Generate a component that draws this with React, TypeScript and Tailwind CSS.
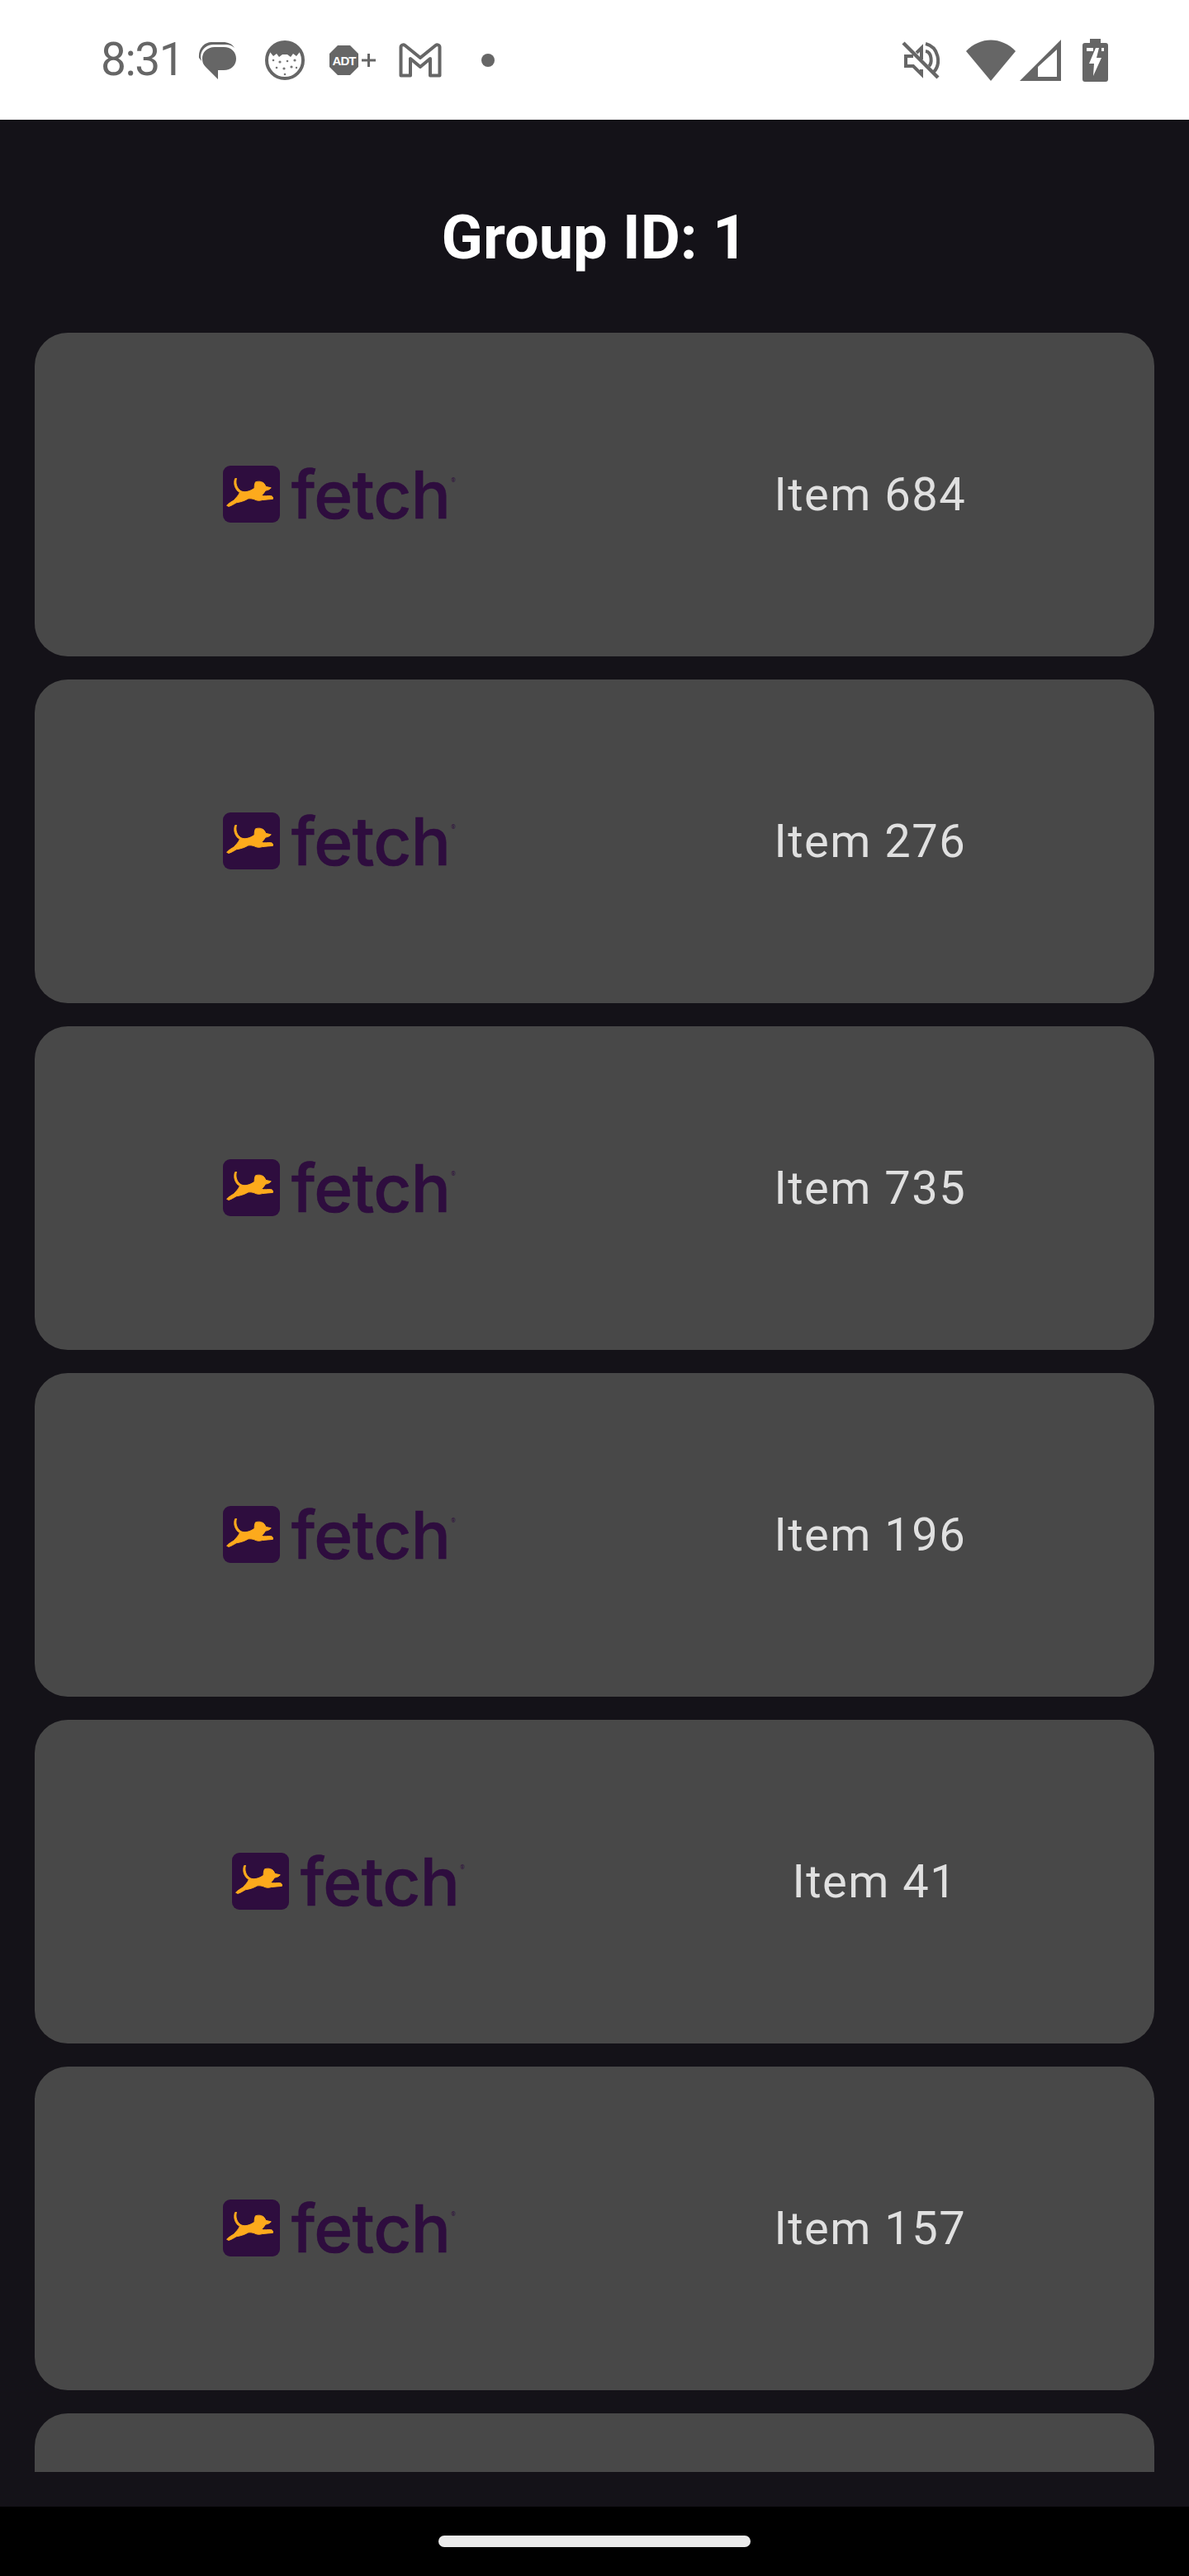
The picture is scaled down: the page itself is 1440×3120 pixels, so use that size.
import React from "react";

const items = ["Item 684", "Item 276", "Item 735", "Item 196", "Item 41", "Item 157"];

const FetchLogo: React.FC = () => (
	<div className="flex items-center w-[440px] h-[80px] shrink-0">
		<svg className="shrink-0" width="70" height="70" viewBox="0 0 70 70">
			<rect x="0" y="0" width="69" height="69" rx="9" fill="#2e0d3e" />
			<path
				d="M16.5 15.5C14.8 21 16.6 27.5 22 30.8C27 33 33 31 38.2 27.3C38 24.5 38.6 21.5 39.5 19.8C43 18.6 47.5 19 50 21.8L52 25.4L58.3 26.8C57 28.6 54.5 29.6 51.5 30.2C49.8 33 48 35 46.5 36.4C50.5 37.2 54.5 36.6 57.5 36.6C60 36.6 61 38.6 60.4 40.4C56.5 40.6 52 41.2 47.5 41.6C45 42.4 42.4 42.6 40 41.6C36.5 40 33.5 39.4 30.4 40C26.5 42.4 21.5 44 16.2 44.8C13 46.6 10 48.8 6.8 49.4L4.6 48.2C7 45.4 10.4 43.8 13.4 41.8C15.6 39 18.6 36.6 20.4 32.5C14.8 29.6 12.4 22 14.6 15.7Z"
				fill="#fdaa1c"
				stroke="#fdaa1c"
				strokeWidth="1"
			/>
		</svg>
		<span className="ml-[13px] font-['Inter',sans-serif] font-medium text-[80px] leading-none text-[#2e0d3e] tracking-[-0.7px] [-webkit-text-stroke:0.6px_#2e0d3e]">
			fetch
		</span>
		<span className="self-start mt-[20px] ml-[1px] text-[7px] leading-none text-[#2e0d3e]">®</span>
	</div>
);

const ItemCard: React.FC<{ label: string }> = ({ label }) => (
	<div className="flex items-center justify-evenly h-[392px] shrink-0 rounded-[40px] bg-[#484848]">
		<FetchLogo />
		<span className="font-['Roboto',sans-serif] text-[56px] leading-none tracking-[1.5px] text-[#e0e0e0]">{label}</span>
	</div>
);

const StatusBar: React.FC = () => (
	<div className="flex items-center h-[145px] shrink-0 bg-white pl-[122px] pr-[98px] text-[#666666]">
		<span className="font-['Roboto',sans-serif] text-[55px] leading-none tracking-[-1.5px] w-[118px]">8:31</span>
		{/* messages */}
		<svg className="shrink-0" width="46" height="46" viewBox="0 0 46 46" fill="#666666">
			<path d="M1 20C0 8 8 1 16 1H30C36 1 41 3 44 8C40 4 36 4 30 4H18C10 4 3 10 3 19L4 24Z" />
			<path d="M5 21C5 12 12 7 20 7H31C40 7 46 13 46 21C46 29 40 35 31 35H24V46L9 31C6 28 5 25 5 21Z" />
		</svg>
		{/* face */}
		<svg className="shrink-0 ml-[35px]" width="48" height="48" viewBox="0 0 48 48">
			<circle cx="24" cy="24" r="22" fill="#fff" stroke="#666666" strokeWidth="4" />
			<path d="M6 14C10 5 17 2 24 2C31 2 38 5 42 14L38 19L34 16L31 20L27 17H21L17 20L14 16L10 19Z" fill="#666666" />
			<g fill="#777777">
				<circle cx="10" cy="24" r="1.3" />
				<circle cx="18" cy="26" r="1.6" />
				<circle cx="27" cy="25" r="1.3" />
				<circle cx="36" cy="24" r="1.6" />
				<circle cx="14" cy="33" r="1.3" />
				<circle cx="23" cy="34" r="1.6" />
				<circle cx="32" cy="32" r="1.6" />
				<circle cx="24" cy="41" r="1.3" />
				<circle cx="38" cy="33" r="1.2" />
			</g>
		</svg>
		{/* adt */}
		<svg className="shrink-0 ml-[30px]" width="56" height="36" viewBox="0 0 56 36">
			<polygon points="10,0 25,0 35,10 35,26 25,36 10,36 0,26 0,10" fill="#666666" />
			<text x="17.5" y="24" textAnchor="middle" fontFamily="Liberation Sans" fontWeight="700" fontSize="15" letterSpacing="-1" fill="#fff">ADT</text>
			<path d="M39 16.5H56V19.5H39ZM46 10H49V26H46Z" fill="#666666" />
		</svg>
		{/* gmail */}
		<svg className="shrink-0 ml-[28px]" width="52" height="42" viewBox="0 0 52 42" fill="none">
			<path d="M2.5 39.5V5C2.5 2.5 5.5 1.5 7.5 3L26 18L44.5 3C46.5 1.5 49.5 2.5 49.5 5V39.5H38V19L26 29L14 19V39.5Z" stroke="#666666" strokeWidth="4" strokeLinejoin="round" />
		</svg>
		<div className="w-[16px] h-[16px] rounded-full bg-[#666666] ml-[48px] shrink-0" />
		<div className="flex-1" />
		{/* mute */}
		<svg className="shrink-0" width="46" height="46" viewBox="0 0 46 46" fill="none" stroke="#666666" strokeWidth="4">
			<path d="M2 2L44 44" strokeWidth="4.5" />
			<path d="M14 18H5V30H14L24 40V34" />
			<path d="M18 14L24 8V22" />
			<path d="M29 12C37 13 37 27 33 30" />
			<path d="M29 3C45 7 48 27 39 37" />
		</svg>
		{/* wifi */}
		<svg className="shrink-0 ml-[32px]" width="60" height="50" viewBox="0 0 60 50" fill="#666666">
			<path d="M0 14C17 -4 43 -4 60 14L30 50Z" />
		</svg>
		{/* signal */}
		<svg className="shrink-0 ml-[5px]" width="50" height="50" viewBox="0 0 50 50" fill="#666666">
			<path fillRule="evenodd" d="M50 0V50H0ZM45 12L22 33V45H45Z" />
		</svg>
		{/* battery */}
		<svg className="shrink-0 ml-[26px]" width="31" height="52" viewBox="0 0 31 52" fill="#666666">
			<path fillRule="evenodd" d="M9 0H22V5H28C30 5 31 6 31 8V49C31 51 30 52 28 52H3C1 52 0 51 0 49V8C0 6 1 5 3 5H9ZM5 11V15H13V11ZM23 11V15H26V11ZM16 11L8 30H14L13 45L23 23H17L20 11Z" />
		</svg>
	</div>
);

const App: React.FC = () => {
	return (
		<div className="flex flex-col w-full h-[3120px] bg-black overflow-hidden font-['Roboto',sans-serif]">
			<StatusBar />
			<main className="flex flex-col h-[2891px] shrink-0 bg-[#141218] pb-[42px]">
				<h1 className="h-[258px] shrink-0 flex items-center justify-center pt-[28px] text-[74px] leading-none font-bold text-white">
					Group ID: 1
				</h1>
				<div className="flex flex-col gap-[28px] flex-1 min-h-0 overflow-hidden px-[42px]">
					{items.map((label) => (
						<ItemCard key={label} label={label} />
					))}
					{/* next row, scrolled out of view */}
					<div className="h-[392px] shrink-0 rounded-[40px] bg-[#484848]" />
				</div>
			</main>
			<div className="flex flex-1 items-center justify-center">
				<div className="w-[378px] h-[14px] rounded-full bg-[#ebebeb]" />
			</div>
		</div>
	);
};

export default App;
